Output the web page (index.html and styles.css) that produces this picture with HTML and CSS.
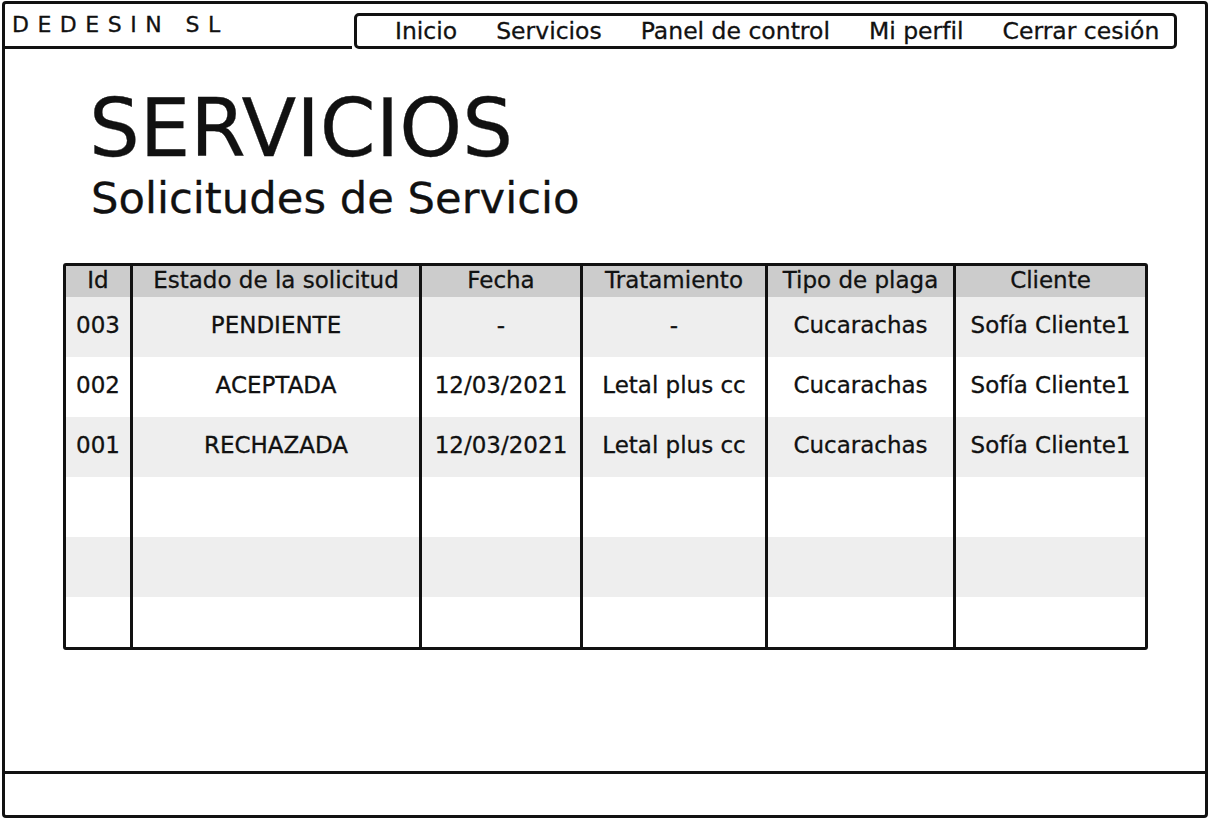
FILE: index.html
```html
<!DOCTYPE html>
<html lang="es">
<head>
    <meta charset="utf-8">
    <meta name="viewport" content="width=device-width, initial-scale=1.0">
    <title>Servicios - DEDESIN SL</title>
    <link rel="stylesheet" href="styles.css">
</head>
<body>
    <div class="frame">
        <header class="topbar">
            <div class="brand">DEDESIN SL</div>
            <nav class="nav">
                <a href="#">Inicio</a>
                <a href="#">Servicios</a>
                <a href="#">Panel de control</a>
                <a href="#">Mi perfil</a>
                <a href="#">Cerrar cesión</a>
            </nav>
        </header>

        <main class="content">
            <h1 class="title">SERVICIOS</h1>
            <h2 class="subtitle">Solicitudes de Servicio</h2>

            <div class="grid">
                <div class="row head">
                    <div>Id</div>
                    <div>Estado de la solicitud</div>
                    <div>Fecha</div>
                    <div>Tratamiento</div>
                    <div>Tipo de plaga</div>
                    <div>Cliente</div>
                </div>
                <div class="row">
                    <div>003</div>
                    <div>PENDIENTE</div>
                    <div>-</div>
                    <div>-</div>
                    <div>Cucarachas</div>
                    <div>Sofía Cliente1</div>
                </div>
                <div class="row">
                    <div>002</div>
                    <div>ACEPTADA</div>
                    <div>12/03/2021</div>
                    <div>Letal plus cc</div>
                    <div>Cucarachas</div>
                    <div>Sofía Cliente1</div>
                </div>
                <div class="row">
                    <div>001</div>
                    <div>RECHAZADA</div>
                    <div>12/03/2021</div>
                    <div>Letal plus cc</div>
                    <div>Cucarachas</div>
                    <div>Sofía Cliente1</div>
                </div>
                <div class="row"><div></div><div></div><div></div><div></div><div></div><div></div></div>
                <div class="row"><div></div><div></div><div></div><div></div><div></div><div></div></div>
                <div class="row last"><div></div><div></div><div></div><div></div><div></div><div></div></div>
            </div>
        </main>

        <footer class="footer"></footer>
    </div>
</body>
</html>
```

FILE: styles.css
```css
*{
    padding: 0;
    margin: 0;
    box-sizing: border-box;
    font-family: "DejaVu Sans", sans-serif;
    font-weight: 400;
    color: #111111;
    -webkit-text-stroke: 0.3px #111111;
}
body{
    background-color: #ffffff;
    width: 1210px;
    height: 820px;
    overflow: hidden;
}
.frame{
    margin: 1px 2px 2px 2px;
    height: 817px;
    border: 3px solid #111111;
    border-radius: 4px;
    display: flex;
    flex-direction: column;
}

/* top bar */
.topbar{
    display: flex;
    align-items: flex-end;
    height: 45px;
}
.brand{
    width: 347px;
    height: 45px;
    padding-left: 7px;
    border-bottom: 3px solid #111111;
    font-size: 22px;
    line-height: 42px;
    letter-spacing: 8.5px;
}
.nav{
    margin-left: 2px;
    width: 823px;
    height: 36px;
    border: 3px solid #111111;
    border-radius: 5px;
    display: flex;
    gap: 39px;
    padding-left: 38px;
}
.nav a{
    font-size: 23.5px;
    line-height: 30px;
    text-decoration: none;
}

/* content */
.content{
    flex: 1;
}
.title{
    margin: 40px 0 0 84px;
    font-size: 80px;
    line-height: 1;
}
.subtitle{
    margin: 8px 0 0 86px;
    font-size: 43.3px;
    line-height: 1;
}
.grid{
    margin: 43px 0 0 58px;
    width: 1085px;
    border: 3px solid #111111;
    border-radius: 3px;
}
.row{
    display: grid;
    grid-template-columns: 64px 289px 161px 185px 188px 192px;
    height: 60px;
}
.row:nth-child(even){
    background-color: #eeeeee;
}
.row > div{
    border-left: 3px solid #111111;
    display: flex;
    align-items: center;
    justify-content: center;
    padding-bottom: 4px;
    font-size: 23px;
}
.row > div:first-child{
    border-left: none;
}
.row.head{
    height: 31px;
    background-color: #cccccc;
}
.row.last{
    height: 50px;
}

/* footer */
.footer{
    height: 44px;
    border-top: 3px solid #111111;
}
```
